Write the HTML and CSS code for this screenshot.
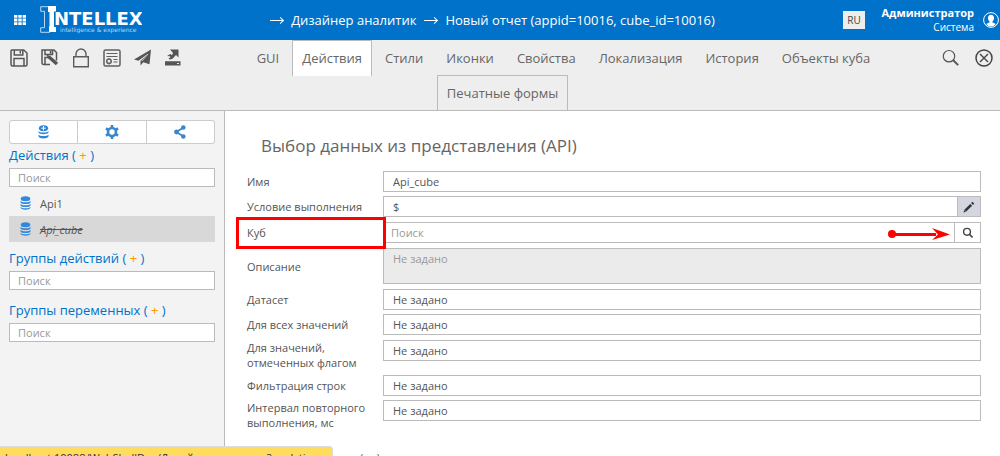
FILE: index.html
```html
<!DOCTYPE html>
<html lang="ru">
<head>
<meta charset="utf-8">
<title>Новый отчет</title>
<link rel="stylesheet" href="styles.css">
</head>
<body>
<header class="topbar">
  <button class="icon-btn apps" aria-label="Приложения">
    <svg width="12" height="10" viewBox="0 0 12 10" fill="#fff"><path d="M0 0h3.4v2.8H0zM4.3 0h3.4v2.8H4.3zM8.6 0H12v2.8H8.6zM0 3.6h3.4v2.8H0zM4.3 3.6h3.4v2.8H4.3zM8.6 3.6H12v2.8H8.6zM0 7.2h3.4V10H0zM4.3 7.2h3.4V10H4.3zM8.6 7.2H12V10H8.6z"/></svg>
  </button>
  <a class="logo" href="#">
    <svg width="102" height="28" viewBox="0 0 102 28" aria-label="Intellex">
      <path d="M8 .7H.7v4.6h3.8v16.4H.7v4.6H10" fill="none" stroke="#b9d7f0" stroke-width="1"/>
      <path d="M8 0h8v5.500h-2v15.500h2V26H9v-5.500h.5V6H8z" fill="#fff"/>
      <text class="logo-name" x="14" y="19" fill="#fff">NTELLEX</text>
      <text class="logo-sub" x="20" y="26" fill="#b9d7f0">intelligence &amp; experience</text>
    </svg>
  </a>
  <nav class="crumbs">
    <span class="arrow"></span><a href="#">Дизайнер аналитик</a>
    <span class="arrow"></span><a href="#">Новый отчет (appid=10016, cube_id=10016)</a>
  </nav>
  <button class="lang">RU</button>
  <div class="user"><strong>Администратор</strong><span>Система</span></div>
  <button class="icon-btn" aria-label="Профиль">
    <svg width="16" height="16" viewBox="0 0 16 16"><circle cx="8" cy="8" r="7.400" fill="none" stroke="#fff"/><path d="M8 2.800c-2 0-3 1.400-3 3.200 0 1.500.6 2.500 1.500 3.300v1.200C5.500 11 4 11.200 3.300 12.200A6.500 6.500 0 0 0 8 14.500a6.500 6.500 0 0 0 4.700-2.300c-.7-1-2.200-1.200-3.200-1.700V9.300C10.400 8.500 11 7.500 11 6c0-1.800-1-3.200-3-3.200z" fill="#fff"/></svg>
  </button>
</header>

<div class="toolbar">
  <div class="toolbar-main">
    <div class="tools">
      <button class="icon-btn" aria-label="Сохранить"><svg width="18" height="18" viewBox="0 0 18 18" fill="none" stroke="#555" stroke-width="1.500"><path d="M1.700 1h12L17 4v11.500a1.500 1.500 0 0 1-1.500 1.500h-13A1.500 1.500 0 0 1 1 15.500V1.700z"/><path d="M4.300 1v5h8.500V1M10.300 2v2.500M4 17V9.500h10V17"/></svg></button>
      <button class="icon-btn" aria-label="Сохранить как"><svg width="18" height="18" viewBox="0 0 18 18" fill="none" stroke="#555" stroke-width="1.500"><path d="M9 15.500H2.500A1.500 1.500 0 0 1 1 14V1h12l2.500 2.500v8M4 1v4.500h7.500V1M9.500 2v2.500M4 15V8.500h4"/><path d="m8 8 8 7" stroke-width="3.400"/><path d="M5.500 5.800 9.500 7 7 9.500z" fill="#555" stroke="none"/></svg></button>
      <button class="icon-btn" aria-label="Заблокировать"><svg width="18" height="20" viewBox="0 0 18 20" fill="none" stroke="#5c5c5c" stroke-width="1.400"><path d="M1.700 8.700h14.600v10H1.700zM4 8.500V6a5 5 0 0 1 10 0v2.500"/></svg></button>
      <button class="icon-btn" aria-label="Отчет"><svg width="18" height="18" viewBox="0 0 18 18" fill="none" stroke="#606060"><rect x="1" y="1" width="16" height="16" rx="1.500" stroke-width="1.500"/><path d="M3.500 4.500h11M3.500 7.500h11M10.500 10.500h4M10.500 13h4" stroke-width="1.200"/><circle cx="6" cy="12.300" r="2.200" stroke-width="1.500"/><path d="M6 9v1M6 14.500v1M3 12.300h1M8 12.300h1"/></svg></button>
      <button class="icon-btn" aria-label="Отправить"><svg width="18" height="17" viewBox="0 0 18 17" fill="#555"><path d="M17 .5 0 10.500l4.500 1.300L14 4.500 6.500 12v4.500l2.800-3.300 6.200 2z"/><path d="m8 12 6-7" stroke="#eee" stroke-width=".8"/></svg></button>
      <button class="icon-btn" aria-label="Выгрузить"><svg width="16" height="17" viewBox="0 0 16 17" fill="#555"><path d="M5 .5h8.500v8l-2.500-2.400L7.500 9.800 5 10.500 3.500 9.700 5.500 8 4 6.800l-1 .7L2.500 6.500 5.500 5l1.500 1.200 1-2.200zM0 12.300h15.500V16.500H0z"/><path d="M12 14.500h2" stroke="#eee"/></svg></button>
    </div>
    <nav class="tabs">
      <a class="tab" href="#">GUI</a>
      <a class="tab tab-active" href="#">Действия</a>
      <a class="tab" href="#">Стили</a>
      <a class="tab" href="#">Иконки</a>
      <a class="tab" href="#">Свойства</a>
      <a class="tab" href="#">Локализация</a>
      <a class="tab" href="#">История</a>
      <a class="tab" href="#">Объекты куба</a>
    </nav>
    <div class="tools tools-right">
      <button class="icon-btn" aria-label="Найти"><svg width="18" height="18" viewBox="0 0 18 18" fill="none" stroke="#555"><circle cx="7" cy="7.200" r="5.700" stroke-width="1.200"/><path d="m11.200 11.300 5 4.800" stroke-width="2"/></svg></button>
      <button class="icon-btn" aria-label="Закрыть"><svg width="18" height="18" viewBox="0 0 18 18" fill="none" stroke="#444" stroke-width="1.500"><circle cx="9" cy="9" r="8"/><path d="m5 5 8 8M13 5l-8 8" stroke-width="1.400"/></svg></button>
    </div>
  </div>
  <nav class="tabs-second"><a class="tab tab-outlined" href="#">Печатные формы</a></nav>
</div>

<div class="layout">
  <aside class="sidebar">
    <div class="modes">
      <button aria-label="Источники"><svg width="11" height="14" viewBox="0 0 11 14" fill="#2f86d6"><ellipse cx="5.500" cy="3.200" rx="4.600" ry="3"/><path d="M.5 6c1 2 9 2 10 0v1.600c-1 2.200-9 2.200-10 0zM.5 9.500c1 2 9 2 10 0v2c-1 2.600-9 2.600-10 0z"/><path d="M5.500 1v4.400M3.300 3.200h4.400" stroke="#fff"/></svg></button>
      <button aria-label="Настройки"><svg width="14" height="14" viewBox="0 0 14 14"><circle cx="7" cy="7" r="4" fill="none" stroke="#3a86cc" stroke-width="2.600"/><path d="M7 0v3M7 11v3M.9 3.500l2.500 1.400M10.600 9.100l2.500 1.400M.9 10.500l2.500-1.400M10.600 4.900l2.500-1.400" stroke="#3a86cc" stroke-width="2.600"/></svg></button>
      <button aria-label="Поделиться"><svg width="12" height="14" viewBox="0 0 12 14" fill="#3a86cc"><path d="M9.500 2.500 2.500 7l7 4.500" fill="none" stroke="#3a86cc" stroke-width="1.800"/><circle cx="9.300" cy="2.500" r="2.300"/><circle cx="2.500" cy="7" r="2.400"/><circle cx="9.300" cy="11.500" r="2.300"/></svg></button>
    </div>
    <section class="group">
      <h2>Действия ( <a href="#">+</a> )</h2>
      <input class="field" type="text" placeholder="Поиск" aria-label="Поиск действий">
      <ul class="items">
        <li><svg width="11" height="14" viewBox="0 0 11 14" fill="#3288dc"><ellipse cx="5.500" cy="2.700" rx="4.800" ry="2.500"/><path d="M.5 4.700c1 2.200 9 2.200 10 0v1.700c-1 2.200-9 2.200-10 0zM.5 7.700c1 2.200 9 2.200 10 0v1.700c-1 2.200-9 2.200-10 0zM.5 10.700c1 2.200 9 2.200 10 0v1c-1 2.600-9 2.600-10 0z"/></svg><a href="#">Api1</a></li>
        <li class="selected"><svg width="11" height="14" viewBox="0 0 11 14" fill="#3288dc"><ellipse cx="5.500" cy="2.700" rx="4.800" ry="2.500"/><path d="M.5 4.700c1 2.200 9 2.200 10 0v1.700c-1 2.200-9 2.200-10 0zM.5 7.700c1 2.200 9 2.200 10 0v1.700c-1 2.200-9 2.200-10 0zM.5 10.700c1 2.200 9 2.200 10 0v1c-1 2.600-9 2.600-10 0z"/></svg><a href="#">Api_cube</a></li>
      </ul>
    </section>
    <section class="group">
      <h2>Группы действий ( <a href="#">+</a> )</h2>
      <input class="field" type="text" placeholder="Поиск" aria-label="Поиск групп действий">
    </section>
    <section class="group">
      <h2>Группы переменных ( <a href="#">+</a> )</h2>
      <input class="field" type="text" placeholder="Поиск" aria-label="Поиск групп переменных">
    </section>
  </aside>

  <main class="content">
    <h1>Выбор данных из представления (API)</h1>
    <form class="form">
      <div class="row row-compact"><label for="name">Имя</label><input class="field" id="name" type="text" value="Api_cube"></div>
      <div class="row"><label for="cond">Условие выполнения</label>
        <div class="combo"><input class="field" id="cond" type="text" value="$"><button class="edit" type="button" aria-label="Изменить"><svg width="12" height="12" viewBox="0 0 12 12"><path d="M2.300 9.700 8.200 3.800" stroke="#333" stroke-width="2.600"/><path d="m9 3 1.300-1.300" stroke="#333" stroke-width="2.600"/><path d="M.6 11.400 1.200 9l1.800 1.800z" fill="#333"/></svg></button></div></div>
      <div class="row row-marked"><label for="cube">Куб</label>
        <div class="combo"><input class="field field-cube" id="cube" type="text" placeholder="Поиск"><button class="find" type="button" aria-label="Найти"><svg width="12" height="12" viewBox="0 0 12 12" fill="none" stroke="#444"><circle cx="5" cy="4.800" r="3.400" stroke-width="1.400"/><path d="m7.400 7.400 3.200 3" stroke-width="1.600"/></svg></button>
          <svg class="pointer" width="65" height="14" viewBox="0 0 65 14" fill="red"><circle cx="5" cy="7" r="4"/><path d="M5 6h44v3H5z"/><path d="m45 1 18 6.500L45 13l6-5.500z"/></svg></div></div>
      <div class="row"><label for="desc">Описание</label><textarea class="field" id="desc" placeholder="Не задано" disabled></textarea></div>
      <div class="row row-compact"><label for="data">Датасет</label><input class="field" id="data" type="text" value="Не задано"></div>
      <div class="row"><label for="all">Для всех значений</label><input class="field" id="all" type="text" value="Не задано"></div>
      <div class="row row-double"><label for="flag">Для значений, отмеченных флагом</label><input class="field" id="flag" type="text" value="Не задано"></div>
      <div class="row row-compact"><label for="filter">Фильтрация строк</label><input class="field" id="filter" type="text" value="Не задано"></div>
      <div class="row row-double"><label for="interval">Интервал повторного выполнения, мс</label><input class="field" id="interval" type="text" value="Не задано"></div>
    </form>
    <p class="more">Время ожидания, мс (мс)</p>
  </main>
</div>
<div class="status">localhost:10088/WebShellDev/Дизайнер аналитик?analytics</div>
</body>
</html>
```
FILE: styles.css
```css
*, *::before, *::after { box-sizing: border-box; }
body {
  margin: 0;
  height: 100vh;
  display: flex;
  flex-direction: column;
  overflow: hidden;
  background: #fff;
  color: #555;
  font: 11px/15px "Open Sans", sans-serif;
}
a { color: inherit; text-decoration: none; }
button, input, textarea { font: inherit; color: inherit; margin: 0; }
svg { display: block; flex: none; }
h1, h2, p { margin: 0; font-weight: 400; }
.icon-btn { padding: 0; border: 0; background: none; }

.topbar {
  flex: none;
  height: 40px;
  padding: 0 1px 0 14px;
  display: flex;
  align-items: center;
  background: #0072c9;
  color: #fff;
}
.logo { margin-left: 14px; }
.logo-name { font: bold 18px "DejaVu Sans", sans-serif; }
.logo-sub { font: 6px "DejaVu Sans", sans-serif; }
.crumbs {
  flex: 1;
  display: flex;
  align-items: center;
  justify-content: center;
  gap: 8px;
  font-size: 13px;
}
.arrow { position: relative; width: 13px; height: 1px; background: #fff; }
.arrow::after {
  content: "";
  position: absolute;
  right: 0;
  top: -2px;
  width: 5px;
  height: 5px;
  border: solid #fff;
  border-width: 1px 1px 0 0;
  transform: rotate(45deg);
}
.lang {
  width: 22px;
  height: 18px;
  padding: 0;
  border: 0;
  background: #eee;
  color: #444;
  font-size: 10px;
}
.user {
  width: 109px;
  margin-right: 9px;
  display: flex;
  flex-direction: column;
  text-align: right;
  font-size: 10px;
  line-height: 14px;
}
.user strong { font-size: 11px; }

.toolbar {
  flex: none;
  background: #eee;
  border-bottom: 1px solid #bbb;
}
.toolbar-main {
  display: flex;
  height: 35px;
  padding: 0 7px 0 10px;
}
.tools { display: flex; align-items: center; gap: 13px; }
.tools-right { gap: 15px; }
.tabs { flex: 1; display: flex; justify-content: center; gap: 3px; height: 36px; padding-left: 4px; }
.tab {
  padding: 0 9px;
  border: 1px solid transparent;
  border-bottom: 0;
  font-size: 13px;
  line-height: 35px;
  color: #666;
  white-space: nowrap;
}
.tab-active { background: #fff; border-color: #bbb; }
.tab-outlined { border-color: #bbb; line-height: 34px; }
.tabs-second { display: flex; justify-content: center; padding-left: 5px; }

.layout { flex: 1; min-height: 0; display: flex; }
.sidebar {
  flex: none;
  width: 225px;
  padding: 9px 9px 0;
  background: #f3f3f3;
  border-right: 1px solid #bbb;
}
.modes { display: flex; height: 24px; margin-bottom: 3px; }
.modes button {
  flex: 1;
  display: flex;
  align-items: center;
  justify-content: center;
  padding: 0;
  background: #fff;
  border: 1px solid #ccc;
  border-left-width: 0;
}
.modes button:first-child { border-left-width: 1px; border-radius: 3px 0 0 3px; }
.modes button:last-child { border-radius: 0 3px 3px 0; }
.group { margin-bottom: 12px; }
.group h2 { font-size: 13px; line-height: 16px; margin-bottom: 5px; color: #0072c9; }
.group h2 a { color: #f90; }
.field {
  display: block;
  width: 100%;
  min-width: 0;
  height: 21px;
  padding: 0 9px;
  border: 1px solid #bbb;
  border-radius: 0;
  background: #fff;
}
.field::placeholder { color: #999; opacity: 1; }
.sidebar .field { height: 19px; padding: 0 8px; }
.items { list-style: none; margin: 3px 0 0; padding: 0; }
.items li { display: flex; align-items: center; gap: 9px; height: 26px; padding-left: 11px; }
.items .selected { background: #d8d8d8; font-style: italic; text-decoration: line-through; }
.group:first-of-type { margin-bottom: 8px; }

.content { flex: 1; min-width: 0; padding: 23px 19px 0 22px; }
.content h1 { padding-left: 14px; font-size: 17px; line-height: 24px; margin-bottom: 13px; color: #666; }
.form { display: flex; flex-direction: column; gap: 5px; }
.row {
  display: grid;
  grid-template-columns: 136px 1fr;
  align-items: center;
  min-height: 21px;
}
.row-compact { height: 20px; min-height: 0; }
.row-double { height: 30px; align-items: start; }
.row-marked { position: relative; }
.row-marked::before {
  content: "";
  position: absolute;
  z-index: 1;
  left: -11px;
  top: -5px;
  width: 150px;
  height: 32px;
  border: 3px solid red;
}
.combo { position: relative; display: flex; }
.combo button {
  flex: none;
  display: flex;
  align-items: center;
  justify-content: center;
  padding: 0;
  border: 1px solid #bbb;
  border-left: 0;
  background: #fff;
}
.combo .edit { width: 23px; background: #d3d6e0; }
.combo .find { width: 26px; }
.field-cube { padding: 0 7px; }
.pointer { position: absolute; right: 29px; top: 5px; }
textarea.field { height: 36px; padding: 2px 9px; background: #ebebeb; resize: none; }
.more { margin-top: 20px; }
.status {
  position: fixed;
  left: 0;
  bottom: 0;
  width: 333px;
  height: 10px;
  padding: 3px 5px 0;
  overflow: hidden;
  background: #ffdc5c;
  border: solid #ddd;
  border-width: 1px 1px 0 0;
  border-radius: 0 4px 0 0;
  color: #333;
  white-space: nowrap;
}
```
